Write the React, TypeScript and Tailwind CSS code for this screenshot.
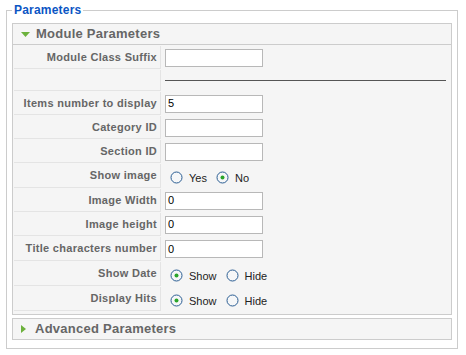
import React from "react";

type Row =
  | { kind: "input"; label: string; value: string; h: string }
  | { kind: "radio"; label: string; options: string[]; checked: number; h: string }
  | { kind: "rule"; h: string };

const rows: Row[] = [
  { kind: "input", label: "Module Class Suffix", value: "", h: "h-[23px]" },
  { kind: "rule", h: "h-[21px]" },
  { kind: "input", label: "Items number to display", value: "5", h: "h-[23px]" },
  { kind: "input", label: "Category ID", value: "", h: "h-[23px]" },
  { kind: "input", label: "Section ID", value: "", h: "h-[23px]" },
  { kind: "radio", label: "Show image", options: ["Yes", "No"], checked: 1, h: "h-[24px]" },
  { kind: "input", label: "Image Width", value: "0", h: "h-[23px]" },
  { kind: "input", label: "Image height", value: "0", h: "h-[23px]" },
  { kind: "input", label: "Title characters number", value: "0", h: "h-[24px]" },
  { kind: "radio", label: "Show Date", options: ["Show", "Hide"], checked: 0, h: "h-[24px]" },
  { kind: "radio", label: "Display Hits", options: ["Show", "Hide"], checked: 0, h: "h-[24px]" },
];

const Radio = ({ checked }: { checked: boolean }) => (
  <svg width="13" height="13" viewBox="0 0 13 13" className="shrink-0">
    <circle cx="6.5" cy="6.5" r="5.5" fill="#f6f7f8" stroke="#2a5d93" strokeWidth="1" />
    {checked && <circle cx="6.5" cy="6.5" r="2" fill="#2aa52a" />}
  </svg>
);

const PanelHeader = ({ title, open }: { title: string; open: boolean }) => (
  <div className="h-[20px] flex items-center bg-[#f5f5f5]">
    {open ? (
      <svg width="9" height="5" viewBox="0 0 9 5" className="ml-[8px] mr-[6px]">
        <polygon points="0,0 9,0 4.5,5" fill="#6cb13c" />
      </svg>
    ) : (
      <svg width="5" height="8" viewBox="0 0 5 8" className="ml-[8px] mr-[9px]">
        <polygon points="0,0 5,4 0,8" fill="#6cb13c" />
      </svg>
    )}
    <span className="text-[13px] font-bold tracking-[0.25px] text-[#666666]">{title}</span>
  </div>
);

export default function App() {
  return (
    <div className="w-[466px] h-[355px] bg-white pl-[6px] font-['Liberation_Sans',Arial,sans-serif]">
      <fieldset className="w-[452px] border border-[#cccccc] px-[5px] pt-[3px] pb-[8px]">
        <legend className="px-[2px] text-[12px] leading-[20px] font-bold tracking-[0.2px] text-[#0b55c4]">
          Parameters
        </legend>

        <div className="border border-[#cccccc] bg-[#f5f5f5]">
          <PanelHeader title="Module Parameters" open />
          <div className="border-t border-[#cccccc] flex flex-col gap-px pt-px pb-[3px]">
            {rows.map((row, i) => (
              <div key={i} className={`flex ${row.h}`}>
                <div className="ml-px w-[147px] shrink-0 border-r border-b border-[#e4e4e4] flex items-center justify-end pr-[3px] text-[11px] font-bold tracking-[0.3px] text-[#666666]">
                  {row.kind !== "rule" ? row.label : ""}
                </div>
                <div className="flex-1 flex items-center pl-[4px] pr-[5px]">
                  {row.kind === "input" && (
                    <div className="w-[98px] h-[18px] border border-[#b8b8b8] bg-white flex items-center pl-[2px] text-[11px] text-black">
                      {row.value}
                    </div>
                  )}
                  {row.kind === "rule" && <div className="w-full h-[2px] border-t border-[#555555] mt-px" />}
                  {row.kind === "radio" && (
                    <div className="flex items-center pl-[5px] pt-[2px] text-[11px] text-[#222222]">
                      {row.options.map((opt, j) => (
                        <div key={opt} className={`flex items-center ${j > 0 ? "ml-[9px]" : ""}`}>
                          <Radio checked={row.checked === j} />
                          <span className="ml-[6px] mt-[2px]">{opt}</span>
                        </div>
                      ))}
                    </div>
                  )}
                </div>
              </div>
            ))}
          </div>
        </div>

        <div className="mt-[3px] border border-[#cccccc]">
          <PanelHeader title="Advanced Parameters" open={false} />
        </div>
      </fieldset>
    </div>
  );
}
